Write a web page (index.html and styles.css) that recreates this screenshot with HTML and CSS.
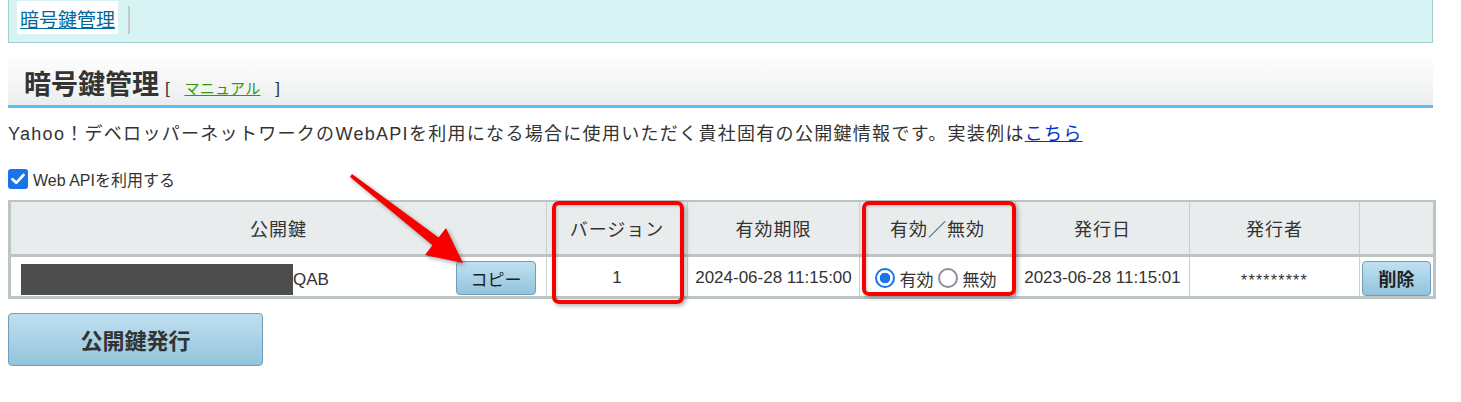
FILE: index.html
```html
<!DOCTYPE html>
<html lang="ja">
<head>
<meta charset="utf-8">
<title>暗号鍵管理</title>
<link rel="stylesheet" href="styles.css">
</head>
<body>
<div class="page">
  <div class="topbar">
    <a class="tab" href="#">暗号鍵管理</a>
    <span class="sep"></span>
  </div>
  <div class="title">
    <h1>暗号鍵管理</h1>
    <span class="manual">[ <a href="#">マニュアル</a> ]</span>
  </div>
  <p class="desc">Yahoo！デベロッパーネットワークのWebAPIを利用になる場合に使用いただく貴社固有の公開鍵情報です。実装例は<a href="#">こちら</a></p>
  <label class="chk">
    <span class="chkbox"><svg width="14" height="12" viewBox="0 0 14 12"><path d="M1.5 6.2 L5.2 9.8 L12.5 2" fill="none" stroke="#fff" stroke-width="2.6" stroke-linecap="round" stroke-linejoin="round"/></svg></span>
    <span>Web APIを利用する</span>
  </label>
  <div class="table-wrap">
    <table class="keys">
      <colgroup>
        <col style="width:537px"><col style="width:141px"><col style="width:172px"><col style="width:156px"><col style="width:174px"><col style="width:170px"><col style="width:75px">
      </colgroup>
      <thead>
        <tr><th>公開鍵</th><th>バージョン</th><th>有効期限</th><th>有効／無効</th><th>発行日</th><th>発行者</th><th></th></tr>
      </thead>
      <tbody>
        <tr>
          <td class="keycell"><div class="keyrow"><span class="mask"></span><span class="tail">QAB</span><button class="btn copy">コピー</button></div></td>
          <td>1</td>
          <td>2024-06-28 11:15:00</td>
          <td class="radios"><span class="radio on"></span><span class="rlabel">有効</span><span class="radio"></span><span class="rlabel">無効</span></td>
          <td>2023-06-28 11:15:01</td>
          <td class="stars">*********</td>
          <td class="delcell"><button class="btn del">削除</button></td>
        </tr>
      </tbody>
    </table>
    <span class="hl hl-ver"></span>
    <span class="hl hl-state"></span>
    <svg class="arrow" width="150" height="120" viewBox="0 0 150 120">
      <polygon points="12,17 14,14 100.6,77.5 108,68 125,103 87,95 94.4,85.3" fill="#f70000"/>
    </svg>
  </div>
  <button class="btn issue">公開鍵発行</button>
</div>
</body>
</html>
```
FILE: styles.css
```css
* { box-sizing: border-box; }
body {
  margin: 0;
  background: #fff;
  font-family: "Liberation Sans", "Noto Sans CJK JP", sans-serif;
  color: #333;
}
.page {
  margin-left: 8px;
  width: 1425px;
}
.topbar {
  height: 43px;
  background: #d8f3f4;
  border: 1px solid #9fd0d0;
  border-top: none;
  display: flex;
  align-items: flex-start;
  padding: 1px 0 0 8px;
}
.tab {
  display: block;
  background: #fff;
  height: 33px;
  padding: 3px 3px 0;
  line-height: 30px;
  font-size: 19px;
  color: #00689a;
  text-decoration: underline;
  font-family: "Noto Sans CJK JP", sans-serif;
}
.sep {
  display: block;
  width: 2px;
  height: 28px;
  margin: 5px 0 0 10px;
  background: #c2cbcb;
}
.title {
  height: 65px;
  background: linear-gradient(#ffffff 15%, #eceeee 100%);
  border-bottom: 3px solid #5bbdf5;
  display: flex;
  align-items: baseline;
  padding: 24px 0 0 16px;
}
.title h1 {
  margin: 0;
  font-size: 27px;
  line-height: 32px;
  font-weight: bold;
  color: #333;
  font-family: "Noto Sans CJK JP", sans-serif;
}
.manual {
  font-size: 17px;
  margin-left: 6px;
  color: #333;
  word-spacing: 10px;
}
.manual a {
  font-size: 15px;
  letter-spacing: 0.3px;
  color: #339900;
  text-decoration: underline;
  word-spacing: 0;
}
.desc {
  margin: 15px 0 0;
  font-size: 18px;
  line-height: 22px;
  letter-spacing: 1.3px;
  color: #333;
}
.desc a {
  color: #0033cc;
  text-decoration: underline;
}
.chk {
  display: flex;
  align-items: center;
  margin-top: 24px;
  height: 20px;
  font-size: 16px;
  color: #333;
}
.chkbox {
  width: 20px;
  height: 20px;
  border-radius: 3px;
  background: #1a73e8;
  display: flex;
  align-items: center;
  justify-content: center;
  margin-right: 5px;
}
.table-wrap {
  position: relative;
  margin-top: 11px;
}
.keys {
  width: 1425px;
  border-collapse: collapse;
  table-layout: fixed;
  border: 3px solid #bcc5c4;
  border-top-width: 2px;
}
.keys th {
  height: 54px;
  background: #e9eced;
  font-weight: normal;
  font-size: 18px;
  letter-spacing: 1px;
  color: #333;
  text-align: center;
  border-left: 1px solid #c8d0d0;
  border-bottom: 3px solid #bcc5c4;
  padding: 0;
}
.keys td {
  height: 39px;
  font-size: 17px;
  color: #333;
  text-align: center;
  border-left: 1px solid #c8d0d0;
  padding: 4px 0 0;
}
.keys td.keycell { text-align: left; padding: 2px 10px 0; }
.keyrow { display: flex; align-items: center; }
.mask {
  display: block;
  width: 272px;
  height: 31px;
  background: #4d4d4d;
  margin-top: 4px;
}
.tail { margin-top: 5px; }
.copy { margin-left: auto; width: 80px; height: 34px; font-size: 17px; margin-top: 2px; }
.radios { white-space: nowrap; }
.radios > span { vertical-align: middle; }
.radio {
  display: inline-block;
  width: 20px;
  height: 20px;
  border-radius: 50%;
  border: 2px solid #8e8e99;
  background: #fff;
}
.radio.on {
  border-color: #1a73e8;
  background: radial-gradient(circle, #1a73e8 0 5px, #fff 5.6px);
}
.rlabel { margin: 0 4px 0 5px; }
.keys td.stars { font-size: 16px; letter-spacing: 1.2px; padding-top: 9px; }
.keys td.delcell { text-align: center; padding-top: 2px; }
.btn {
  font-family: "Liberation Sans", "Noto Sans CJK JP", sans-serif;
  color: #222;
  background: linear-gradient(#bfe0f0, #93c4dc);
  border: 1px solid #6f9fbf;
  border-radius: 4px;
  padding: 0;
  cursor: pointer;
}
.del { width: 69px; height: 35px; font-size: 18px; font-weight: bold; margin-top: 2px; }
.issue {
  display: block;
  margin-top: 14px;
  width: 255px;
  height: 53px;
  font-size: 22px;
  font-weight: bold;
  color: #333;
  font-family: "Noto Sans CJK JP", sans-serif;
}
.hl {
  position: absolute;
  top: 1px;
  border: 4px solid #f70000;
  border-radius: 7px;
  box-shadow: 2px 2px 4px rgba(0,0,0,0.3), inset 1px 1px 3px rgba(0,0,0,0.2);
  pointer-events: none;
}
.hl-ver { left: 544px; width: 132px; height: 103px; }
.hl-state { left: 854px; width: 154px; height: 95px; }
.arrow {
  position: absolute;
  left: 330px;
  top: -40px;
  filter: drop-shadow(2px 2px 2px rgba(0,0,0,0.35));
  overflow: visible;
}
```
